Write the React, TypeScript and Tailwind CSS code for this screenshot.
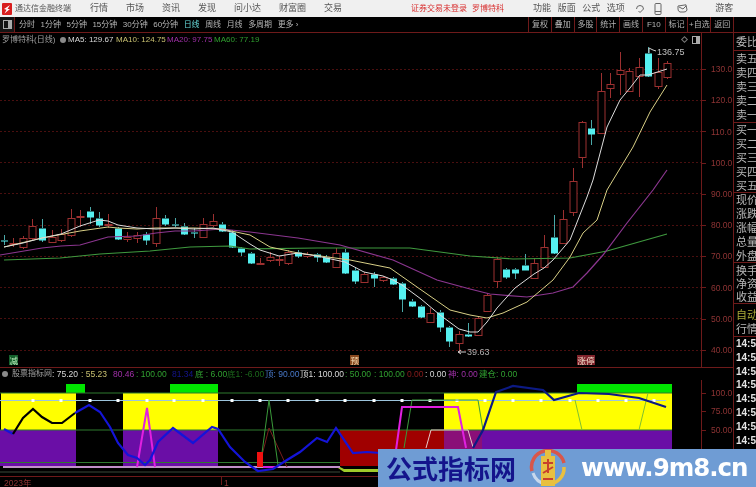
import React from 'react';

type Candle = [number, number, number, number, number, 'r' | 'c'];

const CJK = "font-['Liberation_Sans','Noto_Sans_CJK_SC',sans-serif]";

// x, body top, body bottom, wick high, wick low, up/down
const candles: Candle[] = [
  [4, 240, 241, 235, 245, 'c'], [13, 243, 244, 238, 247, 'r'], [23, 238, 247, 236, 249, 'r'], [32, 226, 238, 219, 240, 'r'],
  [42, 228, 240, 219, 242, 'c'], [52, 237, 242, 230, 243, 'r'], [61, 234, 240, 229, 242, 'r'], [71, 218, 235, 209, 237, 'r'],
  [80, 216, 217, 210, 227, 'r'], [90, 211, 217, 207, 224, 'c'], [99, 218, 225, 212, 227, 'c'], [108, 224, 225, 214, 228, 'r'],
  [118, 228, 239, 227, 240, 'c'], [127, 237, 239, 232, 242, 'r'], [137, 235, 238, 232, 243, 'r'], [146, 234, 240, 232, 245, 'c'],
  [156, 218, 243, 207, 247, 'r'], [165, 218, 224, 215, 226, 'c'], [175, 224, 225, 218, 227, 'c'], [184, 226, 234, 223, 235, 'c'],
  [194, 232, 233, 228, 238, 'c'], [203, 224, 237, 218, 238, 'r'], [213, 221, 225, 214, 227, 'r'], [222, 224, 231, 222, 232, 'c'],
  [232, 232, 247, 230, 248, 'c'], [241, 248, 252, 247, 256, 'c'], [251, 253, 263, 252, 264, 'c'], [260, 263, 264, 258, 264, 'r'],
  [270, 257, 260, 252, 262, 'r'], [279, 259, 260, 256, 266, 'r'], [288, 252, 263, 250, 265, 'r'], [298, 252, 256, 250, 258, 'c'],
  [307, 254, 256, 252, 258, 'r'], [317, 254, 257, 253, 262, 'c'], [326, 257, 262, 255, 263, 'c'], [336, 253, 267, 248, 268, 'r'],
  [345, 252, 273, 249, 274, 'c'], [355, 270, 281, 268, 284, 'c'], [364, 274, 282, 272, 283, 'r'], [374, 274, 278, 272, 287, 'c'],
  [383, 277, 280, 276, 282, 'r'], [393, 278, 284, 277, 285, 'c'], [402, 283, 299, 282, 312, 'c'], [412, 301, 306, 299, 307, 'c'],
  [421, 306, 317, 305, 318, 'c'], [430, 313, 322, 308, 323, 'r'], [440, 312, 327, 310, 332, 'c'], [449, 327, 341, 326, 347, 'c'],
  [459, 334, 343, 331, 353, 'r'], [468, 334, 336, 323, 337, 'c'], [478, 318, 335, 317, 336, 'r'], [487, 295, 311, 293, 312, 'r'],
  [497, 259, 281, 257, 288, 'r'], [506, 269, 277, 268, 279, 'c'], [515, 269, 273, 268, 279, 'c'], [525, 265, 270, 254, 270, 'c'],
  [534, 263, 278, 258, 279, 'r'], [544, 247, 267, 235, 268, 'r'], [554, 237, 253, 215, 254, 'c'], [563, 219, 243, 210, 244, 'r'],
  [573, 181, 212, 168, 216, 'r'], [582, 122, 157, 121, 168, 'r'], [591, 128, 134, 120, 145, 'c'], [601, 91, 133, 73, 134, 'r'],
  [610, 84, 88, 73, 98, 'r'], [620, 70, 74, 52, 95, 'r'], [629, 71, 91, 68, 92, 'r'], [639, 67, 76, 58, 97, 'r'],
  [648, 53, 76, 47, 77, 'c'], [658, 72, 86, 58, 89, 'r'], [667, 63, 77, 61, 79, 'r'],
];

const ma5 = '4,247 23,243 42,238 61,234 80,226 99,220 108,221 118,225 137,228 156,229 175,228 194,229 213,228 232,232 250,244 260,250 279,256 298,253 317,256 345,262 364,272 383,276 393,280 402,285 421,299 440,315 459,329 470,332 478,332 487,322 497,308 506,298 515,288 534,274 544,268 553,260 570,240 587,197 593,180 607,127 620,100 630,88 640,75 648,75 667,69';
const ma10 = '4,247 42,238 80,231 108,227 118,228 137,229 156,228 194,228 222,229 250,235 270,247 298,253 350,260 390,268 417,287 450,310 470,315 487,318 503,313 527,302 553,280 570,257 583,233 597,220 607,190 633,147 650,112 667,85';
const ma20 = '0,255 42,248 61,246 80,245 108,237 137,236 156,233 175,231 194,231 222,229 250,232 298,238 340,245 393,260 437,280 470,289 490,294 527,297 553,293 573,287 587,273 603,255 627,223 653,190 667,170';
const ma60 = '4,260 60,258 100,254 150,251 190,247 230,246 250,249 317,248 410,248 470,256 513,259 570,258 607,251 667,234';

const blueA = '4,429 13,434';
const blackA = '13,434 23,418 33,409 42,417 52,423 62,423 75,413';
const blueB = '75,413 89,405 100,412 110,427 118,443 128,455 137,458 145,465 150,460 158,442 173,428 193,443 212,427 218,429 230,447 245,462 258,471 273,469 287,460 300,452 317,438 327,442 336,428 353,453 367,452 380,453';
const blueC = '473,448 483,430 496,392 513,386 543,390 554,400 579,393 609,394 639,398 666,407';

const priceLevels = [69, 100, 131, 162, 193, 225, 256, 287, 318, 350];
const priceLabels = ['130.0', '120.0', '110.0', '100.0', '90.00', '80.00', '70.00', '60.00', '50.00', '40.00'];
const squares = [33, 61, 90, 118, 147, 174, 203, 232, 260, 288, 317, 345, 374, 402, 430, 457, 485, 513, 541, 570, 598, 626, 654];

const periods = ['分时', '1分钟', '5分钟', '15分钟', '30分钟', '60分钟', '日线', '周线', '月线', '多周期', '更多 ›'];
const tools = ['复权', '叠加', '多股', '统计', '画线', 'F10', '标记', '+自选', '返回'];

const sidebar: { rows: string[]; box: string; row?: string }[] = [
  { rows: ['委比'], box: 'h-[18px] justify-center' },
  { rows: ['卖五', '卖四', '卖三', '卖二', '卖一'], box: 'h-[72px] justify-center' },
  { rows: ['买一', '买二', '买三', '买四', '买五'], box: 'h-[70px] justify-center' },
  { rows: ['现价', '涨跌', '涨幅', '总量', '外盘'], box: 'h-[70px] justify-center' },
  { rows: ['换手', '净资', '收益'], box: 'h-[41px] pt-[2px]', row: 'leading-[13px]' },
];

const Logo = () => (
  <svg width="10" height="12" viewBox="0 0 10 12" className="ml-[2px] shrink-0">
    <rect width="10" height="12" rx="1" fill="#d81e1e" />
    <path d="M2 6 L8 2 L5.5 6 L8 6 L2.5 10.5 L4.5 6.8 Z" fill="#fff" />
  </svg>
);

const Chart = () => (
  <svg viewBox="0 46 701 321" className="w-[701px] h-[321px] block">
    {priceLevels.map((y) => (
      <line key={y} x1="0" x2="701" y1={y + 0.5} y2={y + 0.5} stroke="#4a0f0f" strokeDasharray="2 2" />
    ))}
    {candles.map(([x, t, b, hi, lo, kind]) => {
      const color = kind === 'r' ? '#9c3030' : '#55f0f0';
      return (
        <g key={x}>
          <line x1={x + 0.5} x2={x + 0.5} y1={hi} y2={t} stroke={kind === 'r' ? color : '#4aa8a8'} />
          <line x1={x + 0.5} x2={x + 0.5} y1={b} y2={lo} stroke={kind === 'r' ? color : '#4aa8a8'} />
          <rect
            x={x - 3}
            y={t + 0.5}
            width="7"
            height={Math.max(b - t, 1)}
            fill={kind === 'r' ? '#000' : color}
            stroke={kind === 'r' ? color : 'none'}
          />
        </g>
      );
    })}
    <polyline points={ma60} fill="none" stroke="#3f9a3f" strokeWidth="1.2" />
    <polyline points={ma20} fill="none" stroke="#8c3690" strokeWidth="1.2" />
    <polyline points={ma10} fill="none" stroke="#d8cf86" strokeWidth="1" />
    <polyline points={ma5} fill="none" stroke="#dcdcdc" strokeWidth="1" />

    <path d="M649 48 L649 53 M649 48 L653 50 L656 51" stroke="#cfcfcf" fill="none" />
    <text x="657" y="55" fontSize="9" fill="#c0c0c0" fontFamily="Liberation Sans">136.75</text>
    <path d="M458 352 L466 352 M458 352 L461 350 M458 352 L461 354" stroke="#cfcfcf" fill="none" />
    <text x="467" y="355" fontSize="9" fill="#b0b0b0" fontFamily="Liberation Sans">39.63</text>

    <rect x="9" y="355" width="9" height="10" fill="#14602c" />
    <text x="9.5" y="363.5" fontSize="8.5" fill="#b8e8b8" fontFamily="Noto Sans CJK SC">减</text>
    <rect x="350" y="355" width="9" height="10" fill="#8a4a20" />
    <text x="350.5" y="363.5" fontSize="8.5" fill="#f4d8b0" fontFamily="Noto Sans CJK SC">预</text>
    <rect x="577" y="355" width="18" height="10" fill="#80242c" />
    <text x="577.5" y="363.5" fontSize="8.5" fill="#f0dcc8" fontFamily="Noto Sans CJK SC">涨停</text>
  </svg>
);

const Indicator = () => (
  <svg viewBox="0 380 701 96" className="w-[701px] h-[96px] block">
    {/* colour zones */}
    <rect x="1" y="393" width="75" height="37" fill="#ffff00" />
    <rect x="123" y="393" width="95" height="37" fill="#ffff00" />
    <rect x="444" y="393" width="228" height="37" fill="#ffff00" />
    <rect x="0" y="430" width="76" height="36" fill="#6a0ea6" />
    <rect x="123" y="430" width="95" height="36" fill="#6a0ea6" />
    <rect x="444" y="430" width="228" height="46" fill="#6a0ea6" />
    <rect x="340" y="430" width="104" height="36" fill="#a00000" />
    <rect x="444" y="430" width="38" height="46" fill="#8a0f78" />
    <rect x="66" y="384" width="19" height="9" fill="#00e600" />
    <rect x="170" y="384" width="48" height="9" fill="#00e600" />
    <rect x="577" y="384" width="95" height="9" fill="#00e600" />

    {/* levels */}
    <line x1="0" x2="672" y1="393" y2="393" stroke="#2e7a2e" />
    <line x1="0" x2="666" y1="400.5" y2="400.5" stroke="#9cc4dc" />
    {squares.map((x) => (
      <rect key={x} x={x - 1.5} y="399" width="3" height="3" fill="#fff" />
    ))}
    <line x1="0" x2="672" y1="430" y2="430" stroke="#2e7a2e" />
    <line x1="0" x2="340" y1="462.5" y2="462.5" stroke="#2e7a2e" />
    <line x1="0" x2="340" y1="472" y2="472" stroke="#3a4a3a" />
    <polygon points="338,466 344,469 380,469 380,472 344,472 338,468" fill="#9ecb2a" />
    <line x1="3" x2="340" y1="467" y2="467" stroke="#c090c8" strokeWidth="2" />

    {/* thin signals */}
    <polyline points="260,463 269,428 287,467" fill="none" stroke="#7a1c1c" />
    <polyline points="262,453 269,400 278,465" fill="none" stroke="#3a9a3a" />
    <polyline points="404,448 412,400 478,400 483,430" fill="none" stroke="#3a9a3a" />
    <polyline points="426,448 431,430 468,430 473,447" fill="none" stroke="#e8c8c8" />
    <polyline points="575,400 582,430" fill="none" stroke="#7fc030" />
    <polyline points="639,430 648,393" fill="none" stroke="#7fc030" />

    {/* magenta */}
    <polyline points="137,467 147,408 155,467" fill="none" stroke="#e020e0" strokeWidth="2" />
    <polyline points="396,450 402,407 458,407 466,448" fill="none" stroke="#e020e0" strokeWidth="2" />
    <rect x="257" y="452" width="6" height="15" fill="#f01010" />
    <line x1="263" x2="278" y1="467" y2="467" stroke="#d020d8" strokeWidth="2" />

    {/* main line */}
    <polyline points={blueA} fill="none" stroke="#1414d8" strokeWidth="2.2" />
    <polyline points={blackA} fill="none" stroke="#000" strokeWidth="2.2" />
    <polyline points={blueB} fill="none" stroke="#1414d8" strokeWidth="2.2" />
    <polyline points={blueC} fill="none" stroke="#0c1a84" strokeWidth="2.2" />
  </svg>
);

const Watermark = () => (
  <div className="absolute left-[378px] top-[449px] w-[378px] h-[38px] bg-[#6f9cd4] flex items-center whitespace-nowrap">
    <span className="ml-[8px] w-[130px] shrink-0 text-[26px] leading-none font-bold text-[#14148c] font-['Noto_Sans_CJK_SC',sans-serif]">
      公式指标网
    </span>
    <svg width="38" height="38" viewBox="0 0 38 38" className="ml-[13px] shrink-0">
      <path d="M3 22 A16 16 0 0 1 35 14" fill="none" stroke="#d8564a" strokeWidth="3.5" />
      <path d="M35 18 A16 16 0 0 1 20 35" fill="none" stroke="#e8c040" strokeWidth="3.5" />
      <path d="M17 35 A16 16 0 0 1 4 24" fill="none" stroke="#c8d8ec" strokeWidth="3" />
      <path d="M16 1 H22 V7 H26 V37 H12 V7 H16 Z" fill="#e8c040" />
      <path d="M14 14 H24 M19 10 V24 M14 24 L24 18 M14 30 H24" stroke="#c8402c" strokeWidth="2" fill="none" />
    </svg>
    <span className="ml-[14px] shrink-0 text-[24.5px] leading-none font-bold text-white font-['DejaVu_Sans',sans-serif] tracking-[-1px]">
      www.9m8.cn
    </span>
  </div>
);

export default function App() {
  return (
    <div className={`relative w-[756px] h-[487px] overflow-hidden bg-black flex flex-col blur-[0.35px] ${CJK}`}>
      {/* Title bar */}
      <div className="h-[17px] shrink-0 bg-[#f0f0f0] flex items-center text-[#555] text-[9px] whitespace-nowrap">
        <Logo />
        <span className="ml-[3px] text-[8px] w-[56px]">通达信金融终端</span>
        <div className="ml-[19px] flex gap-[18px]">
          <span>行情</span>
          <span>市场</span>
          <span>资讯</span>
          <span>发现</span>
          <span>问小达</span>
          <span>财富圈</span>
          <span>交易</span>
        </div>
        <span className="ml-[69px] text-[8px] text-[#d83030]">证券交易未登录</span>
        <span className="ml-[5px] text-[8px] text-[#d83030]">罗博特科</span>
        <div className="ml-[29px] flex gap-[6.5px]">
          <span>功能</span>
          <span>版面</span>
          <span>公式</span>
          <span>选项</span>
        </div>
        <svg width="10" height="10" viewBox="0 0 10 10" className="ml-[10.5px]" fill="none" stroke="#666">
          <path d="M1.5 5 A3.5 3.5 0 1 1 8.5 5 L5 8.5 L3.5 7" />
        </svg>
        <svg width="8" height="12" viewBox="0 0 8 12" className="ml-[9px]" fill="none" stroke="#666">
          <rect x="1" y="0.5" width="6" height="11" rx="1" />
          <path d="M1 8.5 H7" />
        </svg>
        <svg width="11" height="9" viewBox="0 0 11 9" className="ml-[14.5px]" fill="none" stroke="#666">
          <path d="M1 2 L9 0.8 L10 6 A3 3 0 0 1 7 8 H3 A3 3 0 0 1 1 5 Z M2 3 L6 5 L9 2" />
        </svg>
        <span className="ml-[27.5px]">游客</span>
      </div>

      {/* Toolbar */}
      <div className="h-[16px] shrink-0 border-b border-[#6e1a1a] flex items-stretch text-[8px] text-[#b4b4b4] whitespace-nowrap">
        <div className="w-[15px] flex items-center justify-center border-r border-[#6e1a1a] bg-[#141414]">
          <div className="w-[9px] h-[9px] border border-[#aaa] flex justify-end">
            <div className="w-[3px] bg-[#aaa]" />
          </div>
        </div>
        <div className="ml-[4px] flex items-center gap-[5.5px]">
          {periods.map((p) => (
            <span key={p} className={p === '日线' ? 'text-[#66d8d8]' : ''}>
              {p}
            </span>
          ))}
        </div>
        <div className="ml-auto flex w-[206px] mr-[22px] border-l border-[#6e1a1a]">
          {tools.map((t) => (
            <span key={t} className="flex-1 flex items-center justify-center border-r border-[#6e1a1a]">
              {t}
            </span>
          ))}
        </div>
      </div>

      <div className="flex-1 flex min-h-0">
        {/* Charts + axis */}
        <div className="w-[734px] shrink-0 flex flex-col border-r border-[#6e1a1a]">
          <div className="h-[334px] shrink-0 flex">
            <div className="w-[701px] shrink-0 flex flex-col">
              <div className="h-[13px] flex items-center text-[8px] whitespace-nowrap">
                <span className="ml-[2px] text-[#a0a0a0] w-[56px]">罗博特科(日线)</span>
                <span className="ml-[2px] w-[6px] h-[6px] rounded-full bg-[#8a8a8a]" />
                <span className="ml-[2px] w-[48px] text-[#d8d8d8]">MA5: 129.67</span>
                <span className="w-[51px] text-[#c8c070]">MA10: 124.75</span>
                <span className="w-[47px] text-[#a030a8]">MA20: 97.75</span>
                <span className="text-[#30a030]">MA60: 77.19</span>
                <span className="ml-auto mr-[1px] flex items-center gap-[5px]">
                  <span className="w-[5px] h-[5px] rotate-45 border border-[#777]" />
                  <span className="w-[8px] h-[8px] border border-[#aaa] flex justify-end">
                    <span className="w-[3px] bg-[#aaa]" />
                  </span>
                </span>
              </div>
              <Chart />
            </div>
            <div className="flex-1 border-l border-[#6e1a1a] pt-[21px] text-[8.5px] text-[#8f3434]">
              {priceLabels.map((p) => (
                <div key={p} className="h-[31.2px] flex items-center">
                  <span className="w-[4px] h-px bg-[#6e1a1a]" />
                  <span className="ml-[5px]">{p}</span>
                </div>
              ))}
            </div>
          </div>

          {/* Indicator header */}
          <div className="h-[13px] shrink-0 border-t border-[#6e1a1a] flex items-center text-[8.5px] whitespace-nowrap [&>span]:shrink-0">
            <span className="ml-[2px] w-[6px] h-[6px] rounded-full bg-[#8a8a8a]" />
            <span className="ml-[4px] w-[40px] text-[8px] text-[#a0a0a0]">股票指标网</span>
            <span className="w-[29px] text-[#d8d8d8]">: 75.20</span>
            <span className="w-[32px] text-[#c8c070]">: 55.23</span>
            <span className="w-[23px] text-[#a030a8]">80.46</span>
            <span className="w-[36px] text-[#30a030]">: 100.00</span>
            <span className="w-[23px] text-[#14148c]">81.34</span>
            <span className="w-[32px] text-[#30a030]">底 : 6.00</span>
            <span className="w-[38px] text-[#1c6a1c]">底1: -6.00</span>
            <span className="w-[35px] text-[#4878c8]">顶: 90.00</span>
            <span className="w-[45px] text-[#d8d8d8]">顶1: 100.00</span>
            <span className="w-[29px] text-[#30a030]">: 50.00</span>
            <span className="w-[33px] text-[#30a030]">: 100.00</span>
            <span className="w-[18px] text-[#8a1c1c]">0.00</span>
            <span className="w-[23px] text-[#d8d8d8]">: 0.00</span>
            <span className="w-[31px] text-[#a030a8]">神: 0.00</span>
            <span className="text-[#30a030]">建仓: 0.00</span>
          </div>

          {/* Indicator */}
          <div className="h-[96px] shrink-0 flex">
            <Indicator />
            <div className="flex-1 border-l border-[#6e1a1a] pt-[4px] text-[8.5px] text-[#8f3434]">
              {['100.0', '75.00', '50.00'].map((p) => (
                <div key={p} className="h-[18.5px] flex items-center">
                  <span className="w-[4px] h-px bg-[#6e1a1a]" />
                  <span className="ml-[5px]">{p}</span>
                </div>
              ))}
            </div>
          </div>

          {/* Date axis */}
          <div className="flex-1 border-t border-[#6e1a1a] flex items-start text-[8.5px] text-[#8f3434]">
            <span className="ml-[4px] w-[217px]">2023年</span>
            <span className="w-px h-[8px] bg-[#6e1a1a]" />
            <span className="ml-[2px]">1</span>
          </div>
        </div>

        {/* Quote panel */}
        <div className="flex-1 min-w-0 overflow-hidden flex flex-col text-[11px] leading-[14px] text-[#b8b8b8] whitespace-nowrap pl-[2px]">
          {sidebar.map((g) => (
            <div key={g.rows[0]} className={`${g.box} shrink-0 border-b border-[#6e1a1a] flex flex-col -ml-[2px] pl-[2px]`}>
              {g.rows.map((r) => (
                <span key={r} className={g.row}>{r}</span>
              ))}
            </div>
          ))}
          <div className="h-[33px] shrink-0 border-b border-[#6e1a1a] flex flex-col pt-[4px] -ml-[2px] pl-[2px]">
            <span className="text-[#a8a838]">自动</span>
            <span>行情</span>
          </div>
          {Array.from({ length: 11 }).map((_, i) => (
            <span key={i} className="h-[13.8px] shrink-0 text-[10px] font-bold leading-[13.8px] text-[#e4e4e4]">
              14:50
            </span>
          ))}
        </div>
      </div>

      <Watermark />
    </div>
  );
}
